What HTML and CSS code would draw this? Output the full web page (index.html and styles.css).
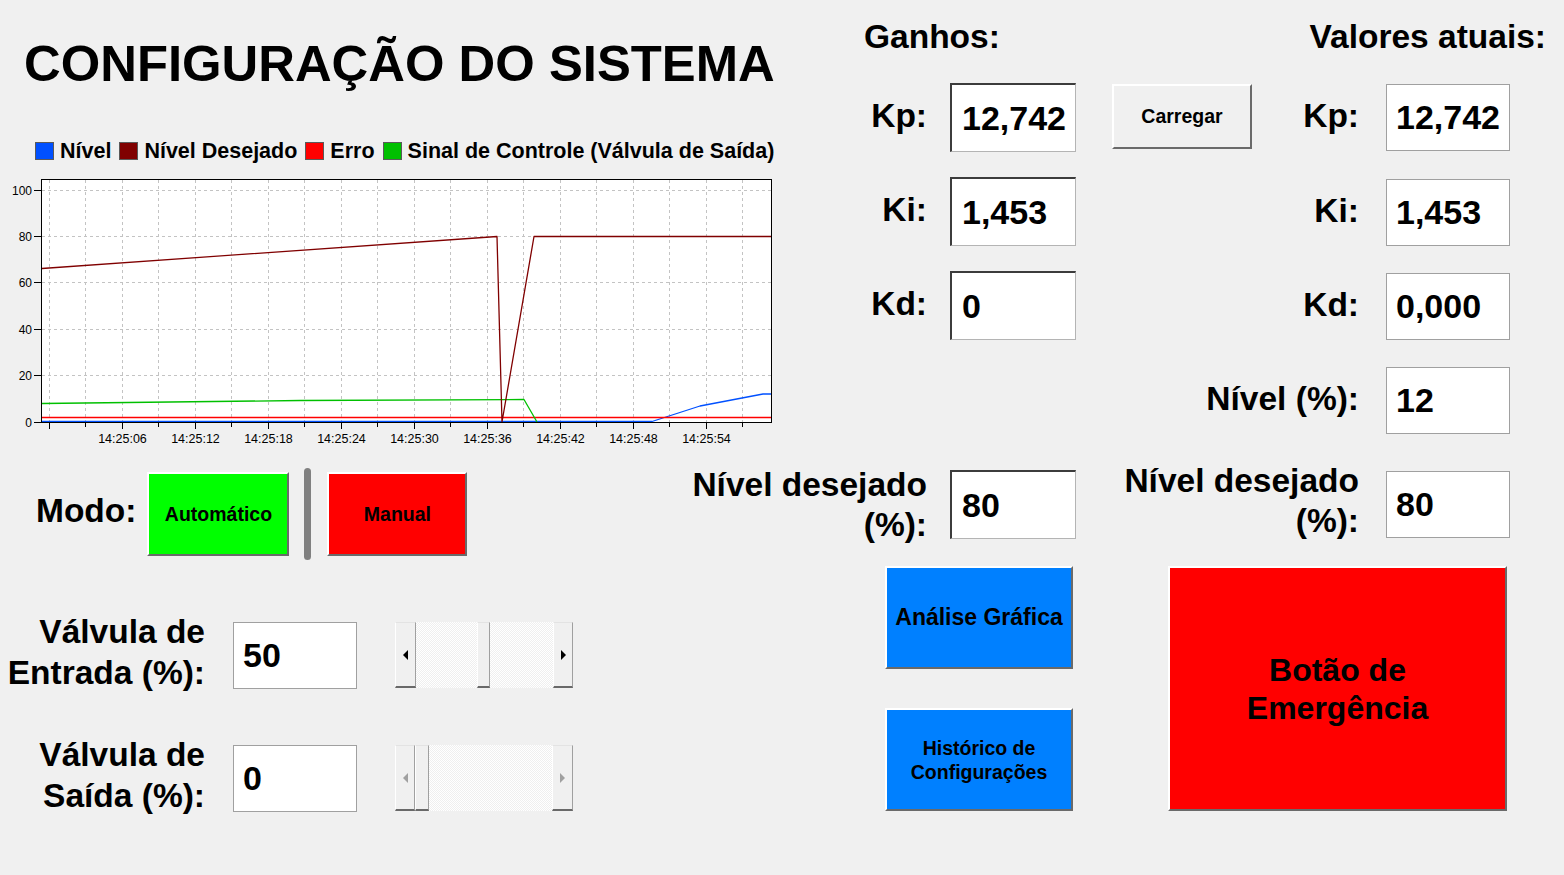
FILE: index.html
```html
<!DOCTYPE html>
<html lang="pt">
<head>
<meta charset="utf-8">
<title>Configuração do Sistema</title>
<link rel="stylesheet" href="styles.css">
</head>
<body>
<div class="page">
  <div class="left">
    <h1 class="title">CONFIGURAÇÃO DO SISTEMA</h1>
    <div class="legend">
      <div class="lg-item"><span class="sw sw-blue"></span>Nível</div>
      <div class="lg-item"><span class="sw sw-dred"></span>Nível Desejado</div>
      <div class="lg-item"><span class="sw sw-red"></span>Erro</div>
      <div class="lg-item"><span class="sw sw-green"></span>Sinal de Controle (Válvula de Saída)</div>
    </div>
    <svg class="chart" width="780" height="280" viewBox="0 0 780 280">
      <rect x="41.5" y="9.5" width="730" height="243" fill="#fff"/>
      <g stroke="#c3c3c3" stroke-width="1" stroke-dasharray="3 3" fill="none">
        <line x1="42" y1="20.5" x2="771" y2="20.5"/>
        <line x1="42" y1="66.5" x2="771" y2="66.5"/>
        <line x1="42" y1="112.5" x2="771" y2="112.5"/>
        <line x1="42" y1="159.5" x2="771" y2="159.5"/>
        <line x1="42" y1="205.5" x2="771" y2="205.5"/>
        <line x1="49.5" y1="10" x2="49.5" y2="252"/>
        <line x1="85.5" y1="10" x2="85.5" y2="252"/>
        <line x1="122.5" y1="10" x2="122.5" y2="252"/>
        <line x1="158.5" y1="10" x2="158.5" y2="252"/>
        <line x1="195.5" y1="10" x2="195.5" y2="252"/>
        <line x1="231.5" y1="10" x2="231.5" y2="252"/>
        <line x1="268.5" y1="10" x2="268.5" y2="252"/>
        <line x1="304.5" y1="10" x2="304.5" y2="252"/>
        <line x1="341.5" y1="10" x2="341.5" y2="252"/>
        <line x1="377.5" y1="10" x2="377.5" y2="252"/>
        <line x1="414.5" y1="10" x2="414.5" y2="252"/>
        <line x1="450.5" y1="10" x2="450.5" y2="252"/>
        <line x1="487.5" y1="10" x2="487.5" y2="252"/>
        <line x1="523.5" y1="10" x2="523.5" y2="252"/>
        <line x1="560.5" y1="10" x2="560.5" y2="252"/>
        <line x1="596.5" y1="10" x2="596.5" y2="252"/>
        <line x1="633.5" y1="10" x2="633.5" y2="252"/>
        <line x1="669.5" y1="10" x2="669.5" y2="252"/>
        <line x1="706.5" y1="10" x2="706.5" y2="252"/>
        <line x1="742.5" y1="10" x2="742.5" y2="252"/>
      </g>
      <g fill="none" stroke-width="1.3" stroke-linejoin="round">
        <polyline stroke="#0050ff" points="42,251.5 652,251.5 700,236 763,224 771,224"/>
        <polyline stroke="#ff0000" points="42,247.5 771,247.5"/>
        <polyline stroke="#00c000" points="42,233.5 300,230.5 524,229.5 537,252"/>
        <polyline stroke="#800000" points="42,98.5 497,66.5 502,252 534,66.5 771,66.5"/>
      </g>
      <rect x="41.5" y="9.5" width="730" height="243" fill="none" stroke="#000" stroke-width="1"/>
      <g stroke="#000" stroke-width="1">
        <line x1="34" y1="252.5" x2="41" y2="252.5"/>
        <line x1="34" y1="205.5" x2="41" y2="205.5"/>
        <line x1="34" y1="159.5" x2="41" y2="159.5"/>
        <line x1="34" y1="112.5" x2="41" y2="112.5"/>
        <line x1="34" y1="66.5" x2="41" y2="66.5"/>
        <line x1="34" y1="20.5" x2="41" y2="20.5"/>
        <line x1="49.5" y1="253" x2="49.5" y2="259"/>
        <line x1="85.5" y1="253" x2="85.5" y2="257"/>
        <line x1="122.5" y1="253" x2="122.5" y2="259"/>
        <line x1="158.5" y1="253" x2="158.5" y2="257"/>
        <line x1="195.5" y1="253" x2="195.5" y2="259"/>
        <line x1="231.5" y1="253" x2="231.5" y2="257"/>
        <line x1="268.5" y1="253" x2="268.5" y2="259"/>
        <line x1="304.5" y1="253" x2="304.5" y2="257"/>
        <line x1="341.5" y1="253" x2="341.5" y2="259"/>
        <line x1="377.5" y1="253" x2="377.5" y2="257"/>
        <line x1="414.5" y1="253" x2="414.5" y2="259"/>
        <line x1="450.5" y1="253" x2="450.5" y2="257"/>
        <line x1="487.5" y1="253" x2="487.5" y2="259"/>
        <line x1="523.5" y1="253" x2="523.5" y2="257"/>
        <line x1="560.5" y1="253" x2="560.5" y2="259"/>
        <line x1="596.5" y1="253" x2="596.5" y2="257"/>
        <line x1="633.5" y1="253" x2="633.5" y2="259"/>
        <line x1="669.5" y1="253" x2="669.5" y2="257"/>
        <line x1="706.5" y1="253" x2="706.5" y2="259"/>
        <line x1="742.5" y1="253" x2="742.5" y2="257"/>
      </g>
      <g class="ylab" text-anchor="end">
        <text x="32" y="256.5">0</text>
        <text x="32" y="210">20</text>
        <text x="32" y="163.5">40</text>
        <text x="32" y="117">60</text>
        <text x="32" y="70.5">80</text>
        <text x="32" y="24.5">100</text>
      </g>
      <g class="xlab" text-anchor="middle">
        <text x="122.5" y="272.5">14:25:06</text>
        <text x="195.5" y="272.5">14:25:12</text>
        <text x="268.5" y="272.5">14:25:18</text>
        <text x="341.5" y="272.5">14:25:24</text>
        <text x="414.5" y="272.5">14:25:30</text>
        <text x="487.5" y="272.5">14:25:36</text>
        <text x="560.5" y="272.5">14:25:42</text>
        <text x="633.5" y="272.5">14:25:48</text>
        <text x="706.5" y="272.5">14:25:54</text>
      </g>
    </svg>
    <div class="mode-row">
      <span class="mode-label">Modo:</span>
      <button class="btn btn-auto">Automático</button>
      <span class="sep"></span>
      <button class="btn btn-manual">Manual</button>
    </div>
    <div class="valve-row valve-in">
      <div class="vlabel">Válvula de<br>Entrada (%):</div>
      <div class="vin">50</div>
      <div class="sb">
        <div class="sb-btn sb-w21"><span class="arr-l"></span></div>
        <div class="track t61"></div>
        <div class="thumb"></div>
        <div class="track t63"></div>
        <div class="sb-btn sb-w20"><span class="arr-r"></span></div>
      </div>
    </div>
    <div class="valve-row valve-out">
      <div class="vlabel">Válvula de<br>Saída (%):</div>
      <div class="vin">0</div>
      <div class="sb sb-dis">
        <div class="sb-btn sb-w20"><span class="arr-l"></span></div>
        <div class="thumb thumb14"></div>
        <div class="track t123"></div>
        <div class="sb-btn sb-w21"><span class="arr-r"></span></div>
      </div>
    </div>
  </div>

  <div class="mid">
    <h2 class="head">Ganhos:</h2>
    <div class="frow r-kp">
      <span class="lbl">Kp:</span>
      <div class="box-in">12,742</div>
    </div>
    <div class="frow r-ki">
      <span class="lbl">Ki:</span>
      <div class="box-in">1,453</div>
    </div>
    <div class="frow r-kd">
      <span class="lbl">Kd:</span>
      <div class="box-in">0</div>
    </div>
    <div class="frow r-nd">
      <span class="lbl lbl2">Nível desejado<br>(%):</span>
      <div class="box-in">80</div>
    </div>
    <button class="btn btn-blue btn-analise">Análise Gráfica</button>
    <button class="btn btn-blue btn-hist">Histórico de<br>Configurações</button>
  </div>

  <div class="right">
    <h2 class="head head-r">Valores atuais:</h2>
    <div class="rrow rr-kp">
      <button class="btn btn-load">Carregar</button>
      <span class="lbl">Kp:</span>
      <div class="rin">12,742</div>
    </div>
    <div class="rrow rr-ki">
      <span class="lbl">Ki:</span>
      <div class="rin">1,453</div>
    </div>
    <div class="rrow rr-kd">
      <span class="lbl">Kd:</span>
      <div class="rin">0,000</div>
    </div>
    <div class="rrow rr-nv">
      <span class="lbl">Nível (%):</span>
      <div class="rin">12</div>
    </div>
    <div class="rrow rr-nd">
      <span class="lbl lbl2 lbl2r">Nível desejado<br>(%):</span>
      <div class="rin">80</div>
    </div>
    <button class="btn btn-emerg">Botão de<br>Emergência</button>
  </div>
</div>
</body>
</html>
```

FILE: styles.css
```css
* { box-sizing: border-box; }
html, body { margin: 0; padding: 0; }
body {
  background: #f0f0f0;
  font-family: "Liberation Sans", Arial, sans-serif;
  color: #000;
  width: 1564px;
  height: 875px;
  overflow: hidden;
}
.page { display: flex; height: 875px; }

/* ---------- left column ---------- */
.left { width: 790px; flex-shrink: 0; display: flex; flex-direction: column; }
.title {
  margin: 34px 0 0 24px;
  font-size: 50.8px;
  font-weight: bold;
  line-height: 60px;
  white-space: nowrap;
}
.legend {
  display: flex;
  align-items: center;
  height: 22px;
  margin: 46px 0 0 35px;
  font-size: 21.5px;
  font-weight: bold;
  white-space: nowrap;
}
.lg-item { display: flex; align-items: center; gap: 6px; margin-right: 8px; }
.sw { width: 19px; height: 18px; border: 1px solid #5a5a5a; }
.sw-blue { background: #0050ff; }
.sw-dred { background: #800000; }
.sw-red { background: #ff0000; }
.sw-green { background: #00c000; }

.chart { display: block; margin-top: 8px; }
.ylab text { font-family: "Liberation Sans", Arial, sans-serif; font-size: 12px; fill: #000; }
.xlab text { font-family: "Liberation Sans", Arial, sans-serif; font-size: 12.5px; fill: #000; }

.mode-row { display: flex; align-items: center; height: 92px; margin-top: 18px; }
.mode-label { margin-left: 36px; font-size: 33.5px; font-weight: bold; line-height: 40px; padding-bottom: 6px; }

.btn {
  font-family: "Liberation Sans", Arial, sans-serif;
  font-weight: bold;
  color: #000;
  padding: 0;
  margin: 0;
  border-style: solid;
  border-width: 2px;
  border-color: #ffffff #6a6a6a #6a6a6a #ffffff;
  display: flex;
  align-items: center;
  justify-content: center;
  text-align: center;
  flex-shrink: 0;
}
.btn-auto { margin-left: 11px; width: 142px; height: 84px; background: #00ff00; font-size: 19.5px; }
.sep { margin-left: 15px; width: 7px; height: 92px; background: #808080; border-radius: 4px; }
.btn-manual { margin-left: 16px; width: 140px; height: 84px; background: #ff0000; font-size: 19.5px; }

.valve-row { display: flex; align-items: center; height: 80px; }
.valve-in { margin-top: 55px; }
.valve-out { margin-top: 43px; }
.vlabel {
  width: 205px;
  flex-shrink: 0;
  text-align: right;
  font-size: 33.5px;
  font-weight: bold;
  line-height: 41px;
  white-space: nowrap;
  padding-bottom: 6px;
}
.vin {
  margin-left: 28px;
  width: 124px;
  height: 67px;
  flex-shrink: 0;
  background: #fff;
  border: 1px solid #a0a0a0;
  padding-left: 9px;
  font-size: 34px;
  font-weight: bold;
  display: flex;
  align-items: center;
}
.sb {
  margin-left: 38px;
  width: 178px;
  height: 66px;
  display: flex;
  flex-shrink: 0;
  background: repeating-conic-gradient(#ffffff 0 25%, #efefef 0 50%) 0 0 / 2px 2px;
}
.sb-btn, .thumb {
  flex-shrink: 0;
  height: 66px;
  background: #f0f0f0;
  border-style: solid;
  border-width: 1px 1px 2px 1px;
  border-color: #e3e3e3 #a0a0a0 #696969 #ffffff;
  display: flex;
  align-items: center;
  justify-content: center;
}
.sb-w21 { width: 21px; }
.sb-w20 { width: 20px; }
.thumb { width: 13px; }
.thumb14 { width: 14px; }
.track { flex-shrink: 0; height: 66px; }
.t61 { width: 61px; }
.t63 { width: 63px; }
.t123 { width: 123px; }
.arr-l {
  width: 0; height: 0;
  border-top: 5px solid transparent;
  border-bottom: 5px solid transparent;
  border-right: 5px solid #000;
}
.arr-r {
  width: 0; height: 0;
  border-top: 5px solid transparent;
  border-bottom: 5px solid transparent;
  border-left: 5px solid #000;
}
.sb-dis .arr-l { border-right-color: #a0a0a0; }
.sb-dis .arr-r { border-left-color: #a0a0a0; }

/* ---------- middle column ---------- */
.mid { width: 300px; flex-shrink: 0; display: flex; flex-direction: column; padding-top: 17px; }
.head {
  margin: 0;
  font-size: 33.5px;
  font-weight: bold;
  line-height: 40px;
  white-space: nowrap;
}
.mid .head { margin-left: 74px; }
.frow {
  display: flex;
  justify-content: flex-end;
  align-items: center;
  height: 69px;
  padding-right: 14px;
}
.r-kp { margin-top: 26px; }
.r-ki { margin-top: 25px; }
.r-kd { margin-top: 25px; }
.r-nd { margin-top: 130px; }
.lbl {
  flex-shrink: 0;
  font-size: 33.5px;
  font-weight: bold;
  line-height: 40px;
  text-align: right;
  white-space: nowrap;
  padding-bottom: 4px;
}
.lbl2 { padding-bottom: 0; }
.mid .lbl { margin-right: 23px; }
.box-in {
  width: 126px;
  height: 69px;
  flex-shrink: 0;
  background: #fff;
  border-style: solid;
  border-width: 2px 1px 1px 2px;
  border-color: #3c3c3c #b4b4b4 #b4b4b4 #3c3c3c;
  padding-left: 10px;
  font-size: 34px;
  font-weight: bold;
  display: flex;
  align-items: center;
}
.btn-blue { background: #0080ff; width: 188px; height: 103px; margin-left: 95px; }
.btn-analise { margin-top: 27px; font-size: 23px; }
.btn-hist { margin-top: 39px; font-size: 19.5px; line-height: 24px; }

/* ---------- right column ---------- */
.right { flex: 1; display: flex; flex-direction: column; padding-top: 17px; }
.head-r { text-align: right; padding-right: 18px; }
.rrow {
  display: flex;
  justify-content: flex-end;
  align-items: center;
  height: 67px;
  padding-right: 54px;
}
.rr-kp { margin-top: 27px; }
.rr-ki { margin-top: 28px; }
.rr-kd { margin-top: 27px; }
.rr-nv { margin-top: 27px; }
.rr-nd { margin-top: 37px; }
.right .lbl { margin-right: 27px; }
.lbl2r { padding-bottom: 8px; }
.rin {
  width: 124px;
  height: 67px;
  flex-shrink: 0;
  background: #fff;
  border: 1px solid #a0a0a0;
  padding-left: 9px;
  font-size: 34px;
  font-weight: bold;
  display: flex;
  align-items: center;
}
.btn-load {
  align-self: flex-start;
  margin-left: 22px;
  margin-right: auto;
  width: 140px;
  height: 65px;
  background: #f0f0f0;
  font-size: 19.5px;
}
.btn-emerg {
  margin-top: 28px;
  margin-left: 78px;
  width: 339px;
  height: 245px;
  background: #ff0000;
  font-size: 32px;
  line-height: 38px;
}
```
